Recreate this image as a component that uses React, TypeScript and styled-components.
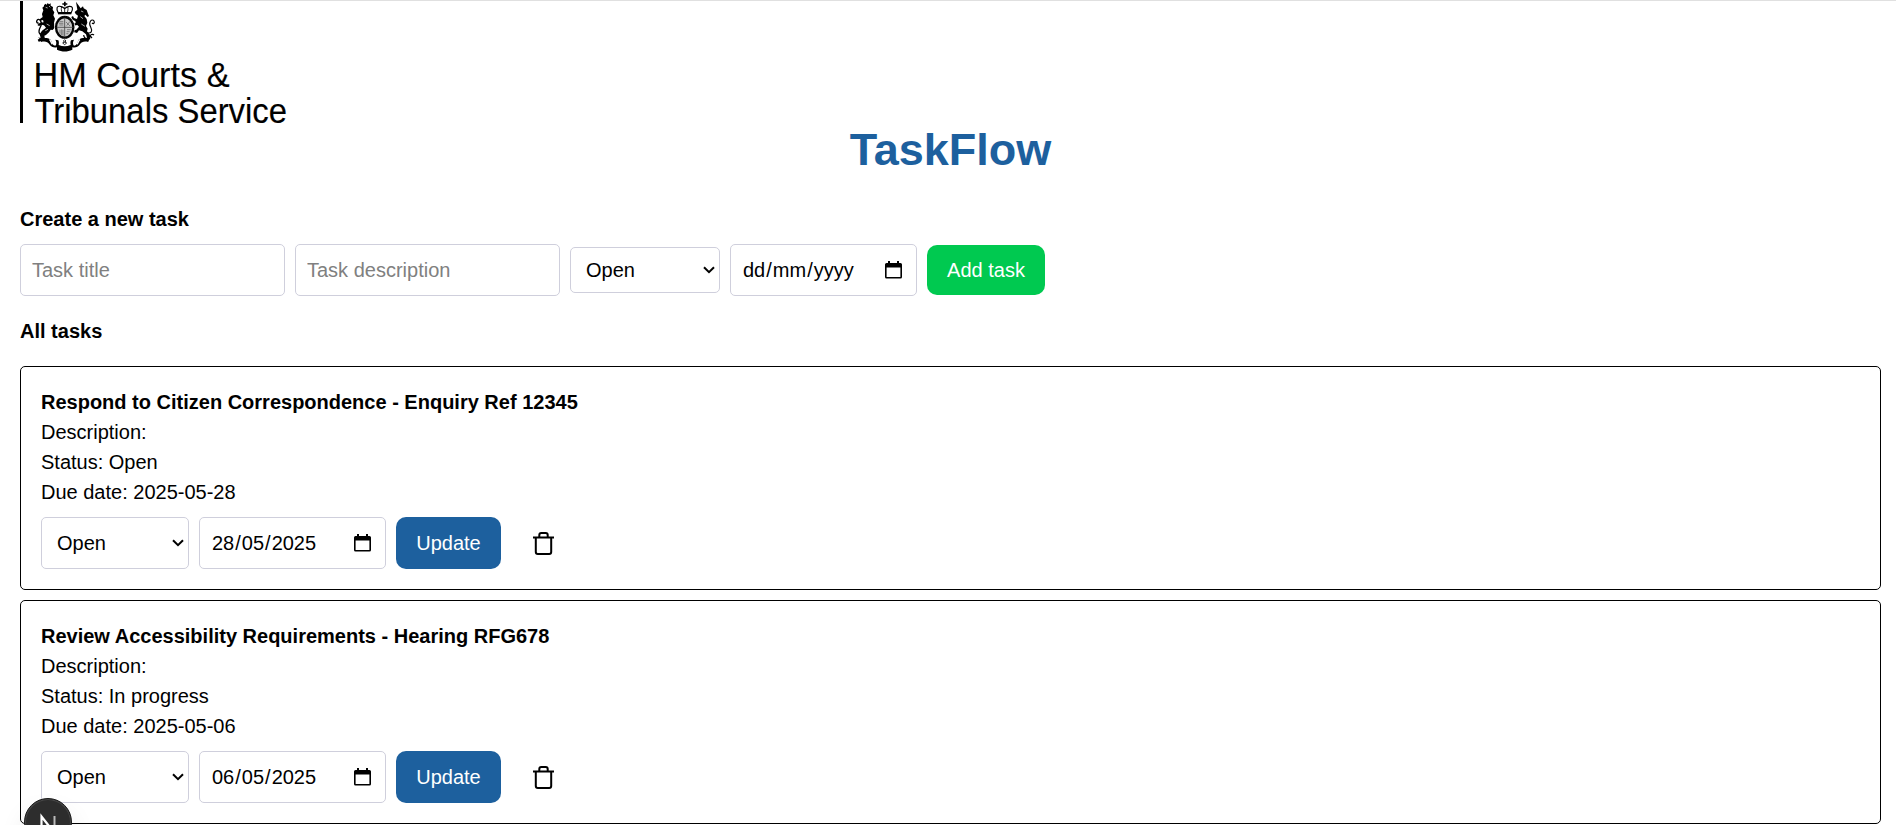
import React from "react";
import styled, { createGlobalStyle } from "styled-components";

const GlobalStyle = createGlobalStyle`
  *, *::before, *::after { box-sizing: border-box; }
  html { font-size: 20px; }
  body {
    margin: 0;
    background: #fff;
    color: #000;
    font-family: Arial, "Liberation Sans", Helvetica, sans-serif;
    line-height: 30px;
    height: 825px;
    overflow: hidden;
  }
  h1, h2, h3, p { margin: 0; }
  button, input, select { font: inherit; color: inherit; }
`;

const Page = styled.div`
  border-top: 1px solid #e0e0e0;
  height: 825px;
  overflow: hidden;
`;

const Main = styled.main`
  width: 1901px;
  padding: 0 20px;
`;

const Crest = styled.svg`
  display: block;
  width: 280px;
  height: 124px;
`;

const Title = styled.h1`
  color: #1d609e;
  font-size: 45px;
  line-height: 50px;
  text-align: center;
  font-weight: 700;
`;

const Heading = styled.h2<{ $top: number; $bottom: number }>`
  font-size: 20px;
  line-height: 30px;
  font-weight: 700;
  margin: ${(p) => p.$top}px 0 ${(p) => p.$bottom}px;
`;

const Controls = styled.div`
  display: flex;
  align-items: center;
  gap: 10px;
`;

const TextField = styled.input`
  width: 265px;
  height: 52px;
  padding: 0 11px;
  border: 1px solid #cfcfdc;
  border-radius: 5px;
  background: #fff;
  &::placeholder { color: #808080; opacity: 1; }
`;

const SelectBox = styled.div<{ $w: number; $h: number }>`
  display: grid;
  align-items: center;
  width: ${(p) => p.$w}px;
  height: ${(p) => p.$h}px;
  > * { grid-area: 1 / 1; }
  > svg { justify-self: end; margin-right: 5px; pointer-events: none; }
`;

const NativeSelect = styled.select`
  appearance: none;
  width: 100%;
  height: 100%;
  padding: 0 15px;
  border: 1px solid #cfcfdc;
  border-radius: 5px;
  background: #fff;
`;

const DateField = styled.div`
  display: flex;
  align-items: center;
  justify-content: space-between;
  width: 187px;
  height: 52px;
  padding: 0 14px 0 11px;
  border: 1px solid #cfcfdc;
  border-radius: 5px;
`;

const DateParts = styled.span`
  display: flex;
  white-space: pre;
`;

const Part = styled.span`
  padding: 0 1px;
`;

const Button = styled.button<{ $tone: string; $w: number; $h: number }>`
  width: ${(p) => p.$w}px;
  height: ${(p) => p.$h}px;
  padding: 0;
  border: 0;
  border-radius: 10px;
  background: ${(p) => p.$tone};
  color: #fff;
`;

const IconButton = styled.button`
  display: flex;
  margin-left: 20px;
  padding: 0;
  border: 0;
  background: none;
`;

const TaskList = styled.div`
  display: flex;
  flex-direction: column;
  gap: 10px;
`;

const Card = styled.article`
  height: 224px;
  padding: 20px;
  border: 1px solid #000;
  border-radius: 5px;
`;

const TaskTitle = styled.h3`
  font-size: 20px;
  font-weight: 700;
`;

const CardControls = styled(Controls)`
  margin-top: 10px;
`;

const DevBadge = styled.div`
  position: fixed;
  left: 24px;
  top: 798px;
  width: 48px;
  height: 48px;
  border-radius: 50%;
  background: #2d2d2d;
  border: 1px solid #1a1a1a;
  box-shadow: inset 0 0 0 1px #484848, 0 16px 32px -8px rgba(0, 0, 0, 0.24);
  svg { display: block; }
`;

function Logo() {
  return (
    <Crest viewBox="0 0 280 124" aria-label="HM Courts & Tribunals Service">
      <path d="M0 0h3v122H0z" />
      <g transform="translate(-20 -1) scale(.33333)">
        {/* crown */}
        <path d="M192 5h5v5h5v4h-5v5h-5v-5h-5v-4h5z" />
        <path d="M175 39c-8-14-4-22 6-20 6 1 10 4 13 7 4-4 8-6 14-7 10-1 13 7 5 20z" fill="#fff" stroke="#000" strokeWidth="3.5" />
        <path d="M185 21c-2 6-1 11 1 16M203 21c2 6 1 11-1 16M194 22v15" fill="none" stroke="#000" strokeWidth="2.5" />
        <path d="M174 36h40v7h-40z" />
        {/* lion */}
        <path d="M132 16l4-5 4 3 3-5 4 4 5-3v7l7 4-1 8 5 8-3 9 5 10-3 12 2 15-6 7-6-1-5 8-9 8-5 2 2 10-6 5-13 3-3-6 9-6-3-10 7-11 12-9-6-7-7-2-8 4-5-3 8-7 11-1-2-7-8 2-2-4 9-7-2-9 4-11-3-8 5-4z" />
        <path d="M127 105c-17-4-8-20-4-28 5-11-6-25-12-16-3 5 1 10 5 7" fill="none" stroke="#000" strokeWidth="4" />
        <path d="M137 22l6 2m4-6l4 4m-11 50l9 5m-13 15l8-4m11 6l-6 9" stroke="#fff" strokeWidth="2" />
        {/* unicorn */}
        <path d="M228 5l14 20 7-6 2 6 9 5 4 11 3 7-4 3-7-7-3 4 7 9 2 11-4 10 5 8-2 8 8 9 1 13-6 8-10-3 1-6 6-2-3-10-11-9-10-3-6 8-10-3-1-5 9-2 8-9-5-5-12 2-5 7-5-2 5-10 12-3-1-6-10-4-2-8 5-3 3 6 9 3 3-10-7-5-3-6 8-7z" />
        <path d="M259 98c16 4 19-5 13-17-8-15 4-27 10-18 3 6-2 10-6 6M251 105c2 14 14 14 17 5 3-7 10-9 14-5m-14 0l8 9" fill="none" stroke="#000" strokeWidth="3.5" />
        <path d="M243 33l7 3m-9 14l8 6m-5 16l11 7" stroke="#fff" strokeWidth="2" />
        {/* shield */}
        <ellipse cx="194" cy="82" rx="31" ry="36" fill="#fff" />
        <ellipse cx="194" cy="82" rx="26" ry="31" fill="#c8c8c8" stroke="#000" strokeWidth="7" />
        <path d="M194 53v58M170 82h48" stroke="#444" strokeWidth="2.5" />
        <path d="M178 65h12M177 70h13M178 75h12M198 66l12 12m0-14l-10 13M180 89v12m5-13v17m4-16v18m12-18h11m-12 6h9m-10 6h6" fill="none" stroke="#555" strokeWidth="2" />
        <ellipse cx="194" cy="82" rx="27" ry="32" fill="none" stroke="#777" strokeWidth="1" strokeDasharray="2 5" />
        {/* motto ribbon */}
        <path d="M114 112c12 4 20 1 30 3 16 4 6 20 22 22 5-5 3-12 0-18l9 2c2 4 2 10 1 14 12 5 24 5 36 0-1-5-1-10 1-14l9-2c-3 6-5 13 0 18 16-2 6-18 22-22 10-2 18 1 30-3-7 7-9 8-9 14-12-3-20-1-25 7-6 9-15 11-23 9v7c-15 7-31 7-46 0v-7c-8 2-17 0-23-9-5-8-13-10-25-7 1-5-2-9-9-14z" />
        <path d="M148 119c5 2 4 9 9 14m83-14c-5 2-4 9-9 14" fill="none" stroke="#fff" strokeWidth="4" />
        <path d="M194 119l4 4-4 4-4-4zM188 129l6-3 6 3-6 5z" fill="#fff" stroke="#000" strokeWidth="2.5" />
      </g>
      <g fontFamily="Liberation Sans, Arial, sans-serif" fontSize="35" stroke="#000" strokeWidth=".15">
        <text x="13.5" y="86" textLength="196" lengthAdjust="spacingAndGlyphs">HM Courts &amp;</text>
        <text x="14.5" y="121.5" textLength="252.5" lengthAdjust="spacingAndGlyphs">Tribunals Service</text>
      </g>
    </Crest>
  );
}

function StatusSelect({ width, height }: { width: number; height: number }) {
  return (
    <SelectBox $w={width} $h={height}>
      <NativeSelect defaultValue="Open" aria-label="Status">
        <option>Open</option>
        <option>In progress</option>
        <option>Completed</option>
      </NativeSelect>
      <svg width="12" height="8" viewBox="0 0 12 8">
        <path d="M1 1.2l5 5 5-5" fill="none" stroke="#000" strokeWidth="2" />
      </svg>
    </SelectBox>
  );
}

function DateInput({ value }: { value: string }) {
  const [day, month, year] = value.split("/");
  return (
    <DateField>
      <DateParts>
        <Part>{day}</Part>/<Part>{month}</Part>/<Part>{year}</Part>
      </DateParts>
      <svg width="17" height="18" viewBox="0 0 17 18">
        <path d="M3 0h2v2h7V0h2v2h1.5A1.5 1.5 0 0 1 17 3.500v12.500A1.500 1.500 0 0 1 15.500 17.500h-14A1.500 1.500 0 0 1 0 16V3.500A1.500 1.500 0 0 1 1.500 2H3zM1.600 6.500V16h13.800V6.500z" fill="#000" fillRule="evenodd" />
      </svg>
    </DateField>
  );
}

function TrashIcon() {
  return (
    <svg width="25" height="25" viewBox="0 0 25 25" fill="none" stroke="#000" strokeWidth="2">
      <path d="M2 6.500h21M4.800 6.500v14.500a2 2 0 0 0 2 2h11.400a2 2 0 0 0 2-2V6.500M8.300 6V4a2 2 0 0 1 2-2h4.400a2 2 0 0 1 2 2v2" />
    </svg>
  );
}

const tasks = [
  { title: "Respond to Citizen Correspondence - Enquiry Ref 12345", status: "Open", due: "2025-05-28" },
  { title: "Review Accessibility Requirements - Hearing RFG678", status: "In progress", due: "2025-05-06" },
];

export default function App() {
  return (
    <Page>
      <GlobalStyle />
      <Main>
        <Logo />
        <Title>TaskFlow</Title>
        <Heading $top={29} $bottom={10}>Create a new task</Heading>
        <Controls>
          <TextField placeholder="Task title" />
          <TextField placeholder="Task description" />
          <StatusSelect width={150} height={46} />
          <DateInput value="dd/mm/yyyy" />
          <Button $tone="#00c950" $w={118} $h={50}>Add task</Button>
        </Controls>
        <Heading $top={20} $bottom={20}>All tasks</Heading>
        <TaskList>
          {tasks.map((task) => (
            <Card key={task.title}>
              <TaskTitle>{task.title}</TaskTitle>
              <p>Description:</p>
              <p>Status: {task.status}</p>
              <p>Due date: {task.due}</p>
              <CardControls>
                <StatusSelect width={148} height={52} />
                <DateInput value={task.due.split("-").reverse().join("/")} />
                <Button $tone="#1d609e" $w={105} $h={52}>Update</Button>
                <IconButton aria-label="Delete task"><TrashIcon /></IconButton>
              </CardControls>
            </Card>
          ))}
        </TaskList>
      </Main>
      <DevBadge>
        <svg width="46" height="46" viewBox="0 0 46 46" fill="none">
          <path d="M16.500 32V17.500L31 36" stroke="#fff" strokeWidth="2.200" />
          <path d="M29.500 17v14" stroke="#bbb" strokeWidth="2" />
        </svg>
      </DevBadge>
    </Page>
  );
}
